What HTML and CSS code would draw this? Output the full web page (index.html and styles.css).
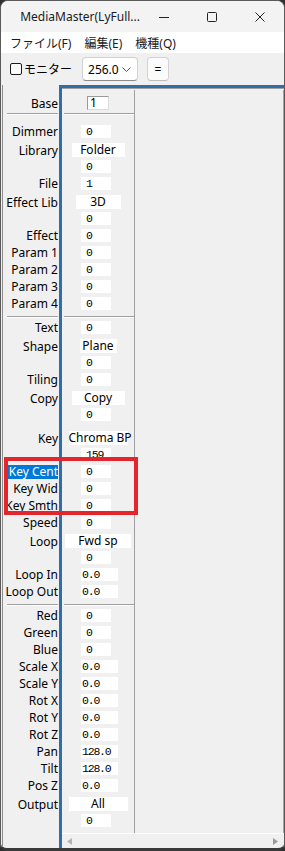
FILE: index.html
```html
<!doctype html>
<html>
  <head>
    <title>MediaMaster</title>
    <meta charset="utf-8"/>
    <link rel="stylesheet" href="styles.css">
  </head>
  <body>
    <div class="window">
      <div class="titlebar">
        <svg class="appicon" width="13" height="11" viewBox="0 0 13 11">
          <rect x="0.5" y="0.5" width="12" height="10" fill="#c9d0d8" stroke="#7d8791"/>
          <rect x="1" y="1" width="4" height="9" fill="#3d4a58"/>
          <rect x="6" y="2" width="6" height="2" fill="#ffffff"/>
        </svg>
        <span class="title">MediaMaster(LyFull...</span>
        <div class="controls">
          <span class="ctl"><svg width="10" height="10" viewBox="0 0 10 10"><line x1="0" y1="5.5" x2="10" y2="5.5" stroke="#222" stroke-width="1"/></svg></span>
          <span class="ctl"><svg width="10" height="10" viewBox="0 0 10 10"><rect x="0.5" y="0.5" width="9" height="9" rx="1" fill="none" stroke="#222" stroke-width="1"/></svg></span>
          <span class="ctl"><svg width="10" height="10" viewBox="0 0 10 10"><path d="M0.5 0.5L9.5 9.5M9.5 0.5L0.5 9.5" stroke="#222" stroke-width="1"/></svg></span>
        </div>
      </div>
      <div class="menubar">
        <span>ファイル(F)</span>
        <span>編集(E)</span>
        <span>機種(Q)</span>
      </div>
      <div class="toolbar">
        <span class="check"></span>
        <span class="checklabel">モニター</span>
        <div class="combo">
          <span>256.0</span>
          <svg width="9" height="5" viewBox="0 0 9 5"><path d="M0.5 0.5L4.5 4.5L8.5 0.5" fill="none" stroke="#555" stroke-width="1"/></svg>
        </div>
        <div class="eqbtn">=</div>
      </div>
      <div class="main">
        <div class="labels">
          <div class="row base"><span>Base</span></div>
          <div class="sep first"></div>
          <div class="row"><span>Dimmer</span></div>
          <div class="row pk"><span>Library</span></div>
          <div class="row sub"></div>
          <div class="row"><span>File</span></div>
          <div class="row pk"><span>Effect Lib</span></div>
          <div class="row sub"></div>
          <div class="row"><span>Effect</span></div>
          <div class="row"><span>Param 1</span></div>
          <div class="row"><span>Param 2</span></div>
          <div class="row"><span>Param 3</span></div>
          <div class="row"><span>Param 4</span></div>
          <div class="sep"></div>
          <div class="row"><span>Text</span></div>
          <div class="row pk"><span>Shape</span></div>
          <div class="row sub"></div>
          <div class="row"><span>Tiling</span></div>
          <div class="row pk"><span>Copy</span></div>
          <div class="row sub"></div>
          <div class="row pk key"><span>Key</span></div>
          <div class="row sub"></div>
          <div class="row"><span class="selected">Key Cent</span></div>
          <div class="row"><span>Key Wid</span></div>
          <div class="row"><span>Key Smth</span></div>
          <div class="row"><span>Speed</span></div>
          <div class="row pk"><span>Loop</span></div>
          <div class="row sub"></div>
          <div class="row"><span>Loop In</span></div>
          <div class="row"><span>Loop Out</span></div>
          <div class="sep"></div>
          <div class="row"><span>Red</span></div>
          <div class="row"><span>Green</span></div>
          <div class="row"><span>Blue</span></div>
          <div class="row"><span>Scale X</span></div>
          <div class="row"><span>Scale Y</span></div>
          <div class="row"><span>Rot X</span></div>
          <div class="row"><span>Rot Y</span></div>
          <div class="row"><span>Rot Z</span></div>
          <div class="row"><span>Pan</span></div>
          <div class="row"><span>Tilt</span></div>
          <div class="row"><span>Pos Z</span></div>
          <div class="row pk"><span>Output</span></div>
          <div class="row sub"></div>
        </div>
        <div class="pane">
          <div class="panebody">
            <div class="values">
              <div class="row base"><span class="basebox">1</span></div>
              <div class="sep first"></div>
              <div class="row"><span class="num">0</span></div>
              <div class="row pk"><span class="pick s-m">Folder</span></div>
              <div class="row sub"><span class="num">0</span></div>
              <div class="row"><span class="num">1</span></div>
              <div class="row pk"><span class="pick s-s">3D</span></div>
              <div class="row sub"><span class="num">0</span></div>
              <div class="row"><span class="num">0</span></div>
              <div class="row"><span class="num">0</span></div>
              <div class="row"><span class="num">0</span></div>
              <div class="row"><span class="num">0</span></div>
              <div class="row"><span class="num">0</span></div>
              <div class="sep"></div>
              <div class="row"><span class="num">0</span></div>
              <div class="row pk"><span class="pick s-xs">Plane</span></div>
              <div class="row sub"><span class="num">0</span></div>
              <div class="row"><span class="num">0</span></div>
              <div class="row pk"><span class="pick s-m">Copy</span></div>
              <div class="row sub"><span class="num">0</span></div>
              <div class="row pk key"><span class="pick s-l">Chroma BP</span></div>
              <div class="row sub"><span class="num">159</span></div>
              <div class="row"><span class="num">0</span></div>
              <div class="row"><span class="num">0</span></div>
              <div class="row"><span class="num">0</span></div>
              <div class="row"><span class="num">0</span></div>
              <div class="row pk"><span class="pick s-xl">Fwd sp</span></div>
              <div class="row sub"><span class="num">0</span></div>
              <div class="row"><span class="num f">0.0</span></div>
              <div class="row"><span class="num f">0.0</span></div>
              <div class="sep"></div>
              <div class="row"><span class="num">0</span></div>
              <div class="row"><span class="num">0</span></div>
              <div class="row"><span class="num">0</span></div>
              <div class="row"><span class="num f">0.0</span></div>
              <div class="row"><span class="num f">0.0</span></div>
              <div class="row"><span class="num f">0.0</span></div>
              <div class="row"><span class="num f">0.0</span></div>
              <div class="row"><span class="num f">0.0</span></div>
              <div class="row"><span class="num f">128.0</span></div>
              <div class="row"><span class="num f">128.0</span></div>
              <div class="row"><span class="num f">0.0</span></div>
              <div class="row pk"><span class="pick s-l">All</span></div>
              <div class="row sub"><span class="num">0</span></div>
            </div>
            <div class="blank"></div>
          </div>
          <div class="hscroll">
            <svg width="5" height="7" viewBox="0 0 5 7"><path d="M5 0L0 3.5L5 7Z" fill="#b4b4b4"/></svg>
            <svg width="5" height="7" viewBox="0 0 5 7"><path d="M0 0L5 3.5L0 7Z" fill="#9a9a9a"/></svg>
          </div>
        </div>
      </div>
      <div class="mark"></div>
    </div>
  </body>
</html>
```
FILE: styles.css
```css
*{
  box-sizing:border-box;
}
html,body{
  margin:0;
  padding:0;
  background:#2e2e2e;
}
body{
  width:285px;
  height:851px;
  overflow:hidden;
  font-family:"Noto Sans","Noto Sans CJK JP",sans-serif;
  font-size:12px;
  color:#000;
}
.window{
  position:relative;
  width:285px;
  height:851px;
  display:flex;
  flex-direction:column;
  background:#f0f0f0;
  border:1px solid #5a5a5a;
  border-bottom:3px solid #3a3a3a;
  border-radius:8px 8px 7px 7px;
  overflow:hidden;
}
.titlebar{
  height:31px;
  display:flex;
  align-items:center;
  background:#f3f3f3;
  padding-left:11px;
}
.appicon{
  margin-top:1px;
}
.title{
  margin-left:8px;
  font-size:12px;
  color:#1b1b1b;
  flex:1;
  white-space:nowrap;
}
.controls{
  display:flex;
  height:100%;
}
.ctl{
  width:48px;
  display:flex;
  align-items:center;
  justify-content:center;
}
.menubar{
  height:21px;
  display:flex;
  align-items:center;
  gap:13px;
  padding-left:9px;
  background:#fff;
  font-size:12px;
  color:#1b1b1b;
}
.toolbar{
  height:32px;
  display:flex;
  align-items:center;
  padding-left:9px;
}
.check{
  width:12px;
  height:12px;
  border:1px solid #1b1b1b;
  border-radius:2px;
  background:#fbfbfb;
}
.checklabel{
  margin-left:2px;
  font-size:12px;
}
.combo{
  margin-left:10px;
  width:56px;
  height:24px;
  display:flex;
  align-items:center;
  justify-content:space-between;
  padding:0 6px 0 5px;
  background:#fff;
  border:1px solid #d0d0d0;
  border-bottom-color:#8a8a8a;
  border-radius:4px;
  font-size:12px;
}
.eqbtn{
  margin-left:9px;
  width:22px;
  height:24px;
  display:flex;
  align-items:center;
  justify-content:center;
  background:#fbfbfb;
  border:1px solid #d3d3d3;
  border-bottom-color:#bdbdbd;
  border-radius:4px;
  font-size:12px;
}
.main{
  flex:1;
  display:flex;
  min-height:0;
}
.labels{
  width:57px;
  margin-left:1px;
  border-left:1px solid #8c8c8c;
  padding-top:5px;
  font-size:12px;
}
.row{
  height:17px;
  display:flex;
  align-items:center;
  white-space:nowrap;
  overflow:hidden;
}
.row.base{
  height:23px;
  padding-top:3px;
}
.row.pk{
  height:16px;
  margin-top:2px;
}
.row.pk.key{
  margin-top:7px;
}
.labels .row{
  justify-content:flex-end;
  padding-right:1px;
}
.selected{
  background:#0078d7;
  color:#fff;
  line-height:14px;
  padding-left:1px;
}
.sep{
  height:7px;
  padding-top:4px;
}
.sep::before{
  content:"";
  display:block;
  border-top:1px solid #a0a0a0;
  border-bottom:1px solid #fff;
}
.sep.first{
  height:10px;
  padding-top:0;
}
.labels .sep{
  margin:0 1px 0 4px;
}
.values .sep{
  margin:0 0 0 2px;
}
.pane{
  flex:1;
  display:flex;
  flex-direction:column;
  border-top:3px solid #2f6ea6;
  border-left:3px solid #2f6ea6;
  margin-right:-2px;
}
.panebody{
  flex:1;
  display:flex;
  border-top:1px solid #a0a0a0;
  padding-top:1px;
}
.values{
  width:73px;
  border-right:1px solid #a0a0a0;
}
.blank{
  flex:1;
  border-right:1px solid #a0a0a0;
  margin-right:2px;
}
.basebox{
  margin-left:25px;
  width:22px;
  height:14px;
  background:#fff;
  border:1px solid #9a9a9a;
  border-right-color:#dcdcdc;
  border-bottom-color:#dcdcdc;
  padding-left:2px;
  font-size:12px;
  line-height:12px;
}
.num{
  margin-left:19px;
  width:30px;
  height:13px;
  background:#fff;
  padding-left:5px;
  font-family:"Liberation Mono",monospace;
  font-size:11.5px;
  letter-spacing:-1.2px;
  line-height:13px;
}
.num.f{
  width:37px;
  padding-left:1px;
}
.pick{
  margin:0 auto;
  height:14px;
  background:#fff;
  text-align:center;
  font-size:12px;
  line-height:14px;
}
.s-xs{width:37px;}
.s-s{width:45px;}
.s-m{width:53px;}
.s-l{width:59px;}
.s-xl{width:66px;}
.hscroll{
  height:15px;
  display:flex;
  align-items:center;
  justify-content:space-between;
  padding:0 8px 0 5px;
  border-top:1px solid #fff;
}
.mark{
  position:absolute;
  left:3px;
  top:456px;
  width:134px;
  height:58px;
  border:4px solid #e2262b;
}
```
